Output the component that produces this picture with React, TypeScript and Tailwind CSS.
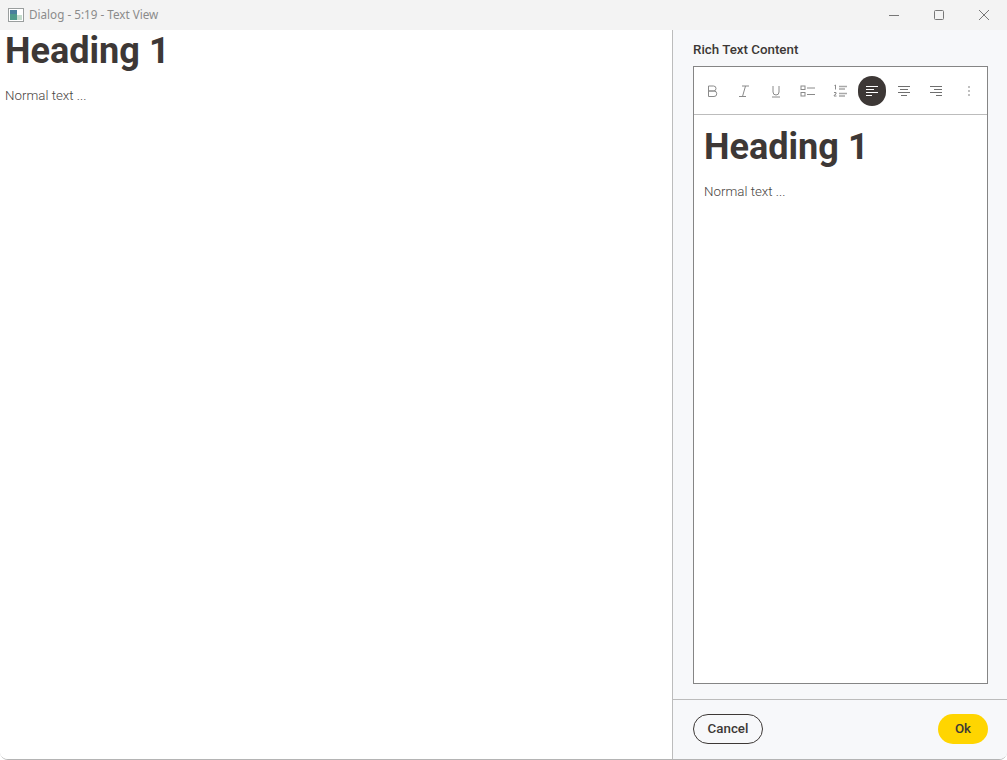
import React from "react";

const Icon = ({ children }: { children: React.ReactNode }) => (
  <svg width="16" height="16" viewBox="0 0 16 16" fill="none" stroke="#8a8a8a" strokeWidth="1">
    {children}
  </svg>
);

const ToolButton = ({ children, active }: { children: React.ReactNode; active?: boolean }) => (
  <div className={`w-[28px] h-[30px] shrink-0 flex items-center justify-center ${active ? "bg-[#3d3836] rounded-full" : ""}`}>
    {children}
  </div>
);

function RichText() {
  return (
    <>
      <h1 className="text-[36.1px] leading-[42px] font-bold text-[#3d3836]">Heading 1</h1>
      <p className="mt-[14px] text-[13.33px] leading-[20px] font-light text-[#4a4543]">Normal text ...</p>
    </>
  );
}

export default function App() {
  return (
    <div className="w-[1007px] h-[760px] flex flex-col bg-white overflow-hidden border-b border-[#b4b4b4] rounded-b-[8px] font-['Roboto',sans-serif]">
      <header className="h-[30px] shrink-0 bg-[#f3f3f3] flex items-center pl-[8px]">
        <svg width="16" height="14" viewBox="0 0 16 14" className="shrink-0">
          <rect x="0.5" y="0.5" width="15" height="13" fill="#fff" stroke="#9a9e9e" />
          <rect x="2" y="2" width="7" height="10" fill="#4f9a8a" />
          <rect x="2" y="2" width="7" height="4" fill="#4a7f9c" />
          <rect x="9" y="7" width="5" height="5" fill="#c5dccd" />
        </svg>
        <span className="ml-[5px] text-[11.7px] text-[#8b8b8b] font-['Noto_Sans','Open_Sans',sans-serif]">Dialog - 5:19 - Text View</span>
        <div className="ml-auto flex items-center h-full">
          <div className="w-[45px] flex justify-center">
            <svg width="12" height="12" viewBox="0 0 12 12" stroke="#777" fill="none"><path d="M1 6.500h10" /></svg>
          </div>
          <div className="w-[45px] flex justify-center">
            <svg width="12" height="12" viewBox="0 0 12 12" stroke="#777" fill="none"><rect x="1.500" y="1.500" width="9" height="9" rx="1" /></svg>
          </div>
          <div className="w-[46px] flex justify-center">
            <svg width="12" height="12" viewBox="0 0 12 12" stroke="#777" fill="none"><path d="M1 1l10 10M11 1L1 11" /></svg>
          </div>
        </div>
      </header>
      <div className="flex-1 flex min-h-0">
        <main className="flex-1 bg-white pl-[5px]">
          <RichText />
        </main>
        <aside className="w-[335px] shrink-0 border-l border-[#bcbcbc] bg-[#f7f8fa] flex flex-col">
          <div className="flex-1 flex flex-col pl-[20px] pr-[19px] pt-[12px] pb-[15px] min-h-0">
            <div className="text-[13.33px] leading-[16px] font-medium text-[#3d3836] mb-[8px]">Rich Text Content</div>
            <div className="flex-1 border border-[#858585] bg-white flex flex-col min-h-0">
              <div className="h-[48px] shrink-0 border-b border-[#bcbcbc] flex items-center pl-[4px] gap-[4px]">
                <ToolButton>
                  <Icon><path d="M4.500 3h5a2.500 2.500 0 0 1 0 5h-5zM4.500 8h5.500a2.750 2.750 0 0 1 0 5.500H4.500z" /></Icon>
                </ToolButton>
                <ToolButton>
                  <Icon><path d="M6 3h7M3 13.500h7M9.500 3l-3 10.500" /></Icon>
                </ToolButton>
                <ToolButton>
                  <Icon><path d="M5 3v6a3 3 0 0 0 6 0V3M4 14h8" /></Icon>
                </ToolButton>
                <ToolButton>
                  <Icon><rect x="1" y="3" width="4" height="3.500" /><rect x="1" y="9.500" width="4" height="3.500" /><path d="M7 5h8M7 11.500h8" /></Icon>
                </ToolButton>
                <ToolButton>
                  <svg width="16" height="16" viewBox="0 0 16 16" fill="none" stroke="#8a8a8a">
                    <path d="M2.500 2.500l1-.5v4.500M2 9.500h2v1.500l-2 1.500v.500h2.500" />
                    <path d="M7 3.500h8M7 6h6M7 10.500h8M7 13h6" strokeWidth="1.600" stroke="#a8a8a8" />
                  </svg>
                </ToolButton>
                <ToolButton active>
                  <svg width="14" height="10" viewBox="0 0 14 10" stroke="#fff" fill="none">
                    <path d="M1 .5h12M1 3.500h8M1 6.500h12M1 9.500h6" />
                  </svg>
                </ToolButton>
                <ToolButton>
                  <svg width="14" height="10" viewBox="0 0 14 10" stroke="#6f6f6f" fill="none">
                    <path d="M1 .5h12M3 3.500h8M1 6.500h12M4 9.500h6" />
                  </svg>
                </ToolButton>
                <ToolButton>
                  <svg width="14" height="10" viewBox="0 0 14 10" stroke="#6f6f6f" fill="none">
                    <path d="M1 .5h12M5 3.500h8M1 6.500h12M7 9.500h6" />
                  </svg>
                </ToolButton>
                <ToolButton>
                  <svg width="4" height="12" viewBox="0 0 4 12" fill="#c0c0c0" className="ml-[1px]">
                    <rect x="1" y="1" width="2" height="2" /><rect x="1" y="5" width="2" height="2" /><rect x="1" y="9" width="2" height="2" />
                  </svg>
                </ToolButton>
              </div>
              <div className="flex-1 px-[10px] pt-[11px]">
                <RichText />
              </div>
            </div>
          </div>
          <footer className="h-[60px] shrink-0 border-t border-[#bcbcbc] flex items-start justify-between pl-[20px] pr-[19px] pt-[14px]">
            <button className="w-[70px] h-[30px] rounded-full border border-[#3d3836] text-[13.33px] font-medium text-[#3d3836]">Cancel</button>
            <button className="w-[50px] h-[30px] rounded-full bg-[#ffd500] text-[13.33px] font-medium text-[#3d3836]">Ok</button>
          </footer>
        </aside>
      </div>
    </div>
  );
}
